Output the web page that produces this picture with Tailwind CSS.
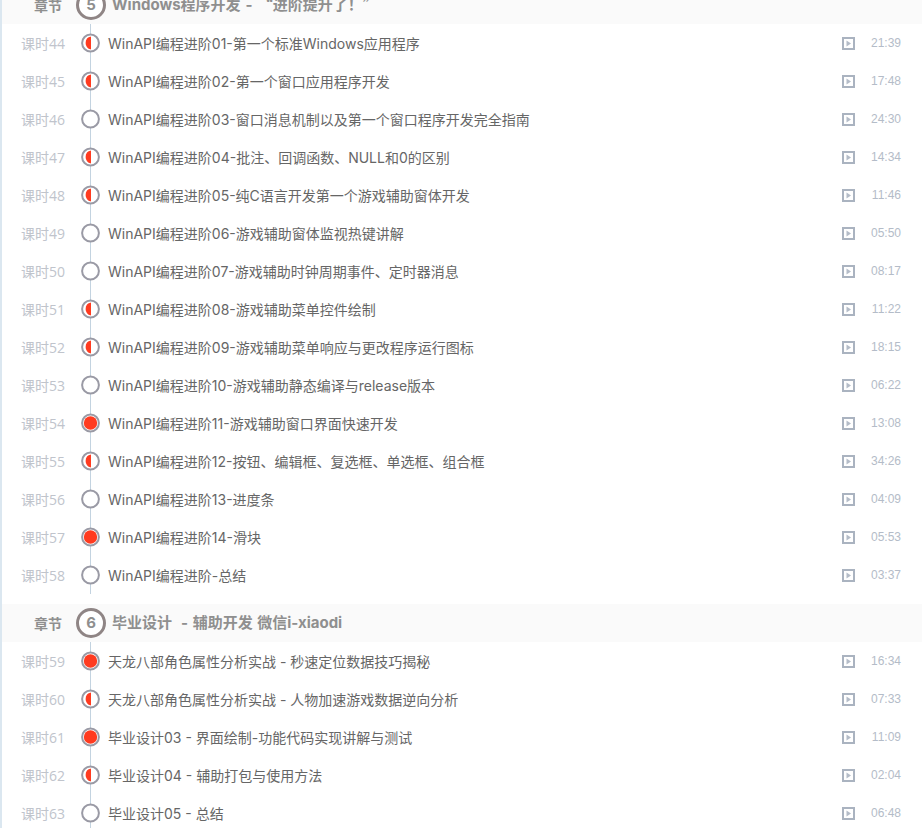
<!DOCTYPE html>
<html lang="zh-CN">
<head>
  <meta charset="UTF-8">
  <title>课程目录</title>
  <script src="https://cdn.jsdelivr.net/npm/@tailwindcss/browser@4"></script>
</head>
<body class="bg-white overflow-hidden h-[828px] font-['Inter','Noto_Sans_CJK_SC',sans-serif]">
  <div id="list" class="border-l-2 border-[#dbe7f0] -mt-[14px] pb-[10px]">
    <div class="flex items-center h-[38px] bg-[#fafafa] text-[#8f8f8f] font-bold">
      <span class="w-[60px] text-right text-[14px]">章节</span>
      <span class="ml-[14px] w-[30px] h-[30px] rounded-full border-[3px] border-[#8f8585] bg-white flex items-center justify-center text-[15px]">5</span>
      <span class="ml-[6px] text-[15px] whitespace-pre [word-spacing:1.5px]">Windows程序开发 - <span class="font-['Noto_Sans_CJK_SC',sans-serif]">“进阶提升了！”</span></span>
    </div>
    <div id="rows1"></div>
    <div class="flex items-center h-[38px] mt-[10px] bg-[#fafafa] text-[#8f8f8f] font-bold">
      <span class="w-[60px] text-right text-[14px]">章节</span>
      <span class="ml-[14px] w-[30px] h-[30px] rounded-full border-[3px] border-[#8f8585] bg-white flex items-center justify-center text-[15px]">6</span>
      <span class="ml-[6px] text-[15px] whitespace-pre [word-spacing:1px]">毕业设计  - 辅助开发 微信i-xiaodi</span>
    </div>
    <div id="rows2"></div>
  </div>
  <template id="row">
    <div class="relative flex items-center h-[38px]">
      <span class="lesson w-[62px] pl-[19px] text-[14px] text-[#c0c4cc] whitespace-nowrap font-['Open_Sans','Noto_Sans_CJK_SC',sans-serif]"></span>
      <span class="relative w-[44px] h-full flex items-center pl-[16px]">
        <span class="absolute left-[26px] top-0 bottom-0 w-[1px] bg-[#c3d3e0]"></span>
        <svg class="relative" width="21" height="20" viewBox="0 0 21 20">
          <circle cx="10.5" cy="10" r="8.4" fill="#fff" stroke="#9a9aa5" stroke-width="2"></circle>
          <path class="dot" fill="#ff3b20" d=""></path>
        </svg>
      </span>
      <span class="title flex-1 text-[14px] text-[#666] whitespace-nowrap"></span>
      <svg class="mr-[16px]" width="13" height="13" viewBox="0 0 13 13">
        <rect x="1" y="1" width="11" height="11" fill="#fff" stroke="#aab3c0" stroke-width="2"></rect>
        <path d="M4.5 3.5 L9 6.5 L4.5 9.5 Z" fill="#b4bcc8"></path>
      </svg>
      <span class="time w-[30px] mr-[21px] text-[12px] text-[#b4bcc8] text-right font-['Liberation_Sans',sans-serif]"></span>
    </div>
  </template>
  <script>
    const half = "M11 3.6 A6.5 6.5 0 0 0 11 16.4 Z";
    const full = "M10.5 3.3 A6.7 6.7 0 0 1 10.5 16.7 A6.7 6.7 0 0 1 10.5 3.3 Z";
    const rows1 = [
      [44, "WinAPI编程进阶01-第一个标准Windows应用程序", "21:39", half],
      [45, "WinAPI编程进阶02-第一个窗口应用程序开发", "17:48", half],
      [46, "WinAPI编程进阶03-窗口消息机制以及第一个窗口程序开发完全指南", "24:30", ""],
      [47, "WinAPI编程进阶04-批注、回调函数、NULL和0的区别", "14:34", half],
      [48, "WinAPI编程进阶05-纯C语言开发第一个游戏辅助窗体开发", "11:46", half],
      [49, "WinAPI编程进阶06-游戏辅助窗体监视热键讲解", "05:50", ""],
      [50, "WinAPI编程进阶07-游戏辅助时钟周期事件、定时器消息", "08:17", ""],
      [51, "WinAPI编程进阶08-游戏辅助菜单控件绘制", "11:22", half],
      [52, "WinAPI编程进阶09-游戏辅助菜单响应与更改程序运行图标", "18:15", half],
      [53, "WinAPI编程进阶10-游戏辅助静态编译与release版本", "06:22", ""],
      [54, "WinAPI编程进阶11-游戏辅助窗口界面快速开发", "13:08", full],
      [55, "WinAPI编程进阶12-按钮、编辑框、复选框、单选框、组合框", "34:26", half],
      [56, "WinAPI编程进阶13-进度条", "04:09", ""],
      [57, "WinAPI编程进阶14-滑块", "05:53", full],
      [58, "WinAPI编程进阶-总结", "03:37", ""],
    ];
    const rows2 = [
      [59, "天龙八部角色属性分析实战 - 秒速定位数据技巧揭秘", "16:34", full],
      [60, "天龙八部角色属性分析实战 - 人物加速游戏数据逆向分析", "07:33", half],
      [61, "毕业设计03 - 界面绘制-功能代码实现讲解与测试", "11:09", full],
      [62, "毕业设计04 - 辅助打包与使用方法", "02:04", half],
      [63, "毕业设计05 - 总结", "06:48", ""],
    ];
    const tpl = document.getElementById("row");
    function fill(id, rows) {
      const box = document.getElementById(id);
      rows.forEach(function (r) {
        const el = tpl.content.cloneNode(true);
        el.querySelector(".lesson").textContent = "课时" + r[0];
        el.querySelector(".title").textContent = r[1];
        el.querySelector(".time").textContent = r[2];
        el.querySelector(".dot").setAttribute("d", r[3]);
        box.appendChild(el);
      });
    }
    fill("rows1", rows1);
    fill("rows2", rows2);
  </script>
</body>
</html>
